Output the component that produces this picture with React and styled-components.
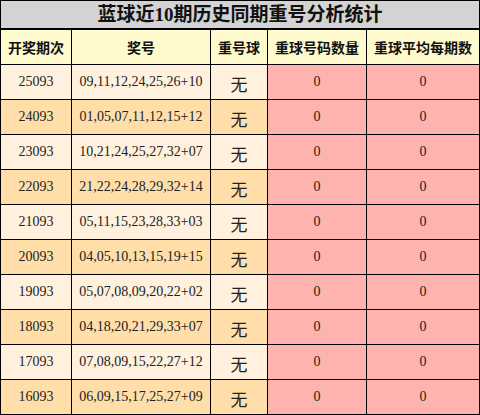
import styled, { createGlobalStyle } from "styled-components";

const GlobalStyle = createGlobalStyle`
  body {
    margin: 0;
    background: #fff;
  }
`;

const Table = styled.table`
  width: 480px;
  border-collapse: collapse;
  table-layout: fixed;
  font-family: "Liberation Serif", "Noto Sans CJK SC", serif;
  color: #222;
`;

const TitleCell = styled.th`
  height: 27px;
  padding: 0;
  background: #d3d3d3;
  border: 1px solid #000;
  border-bottom-width: 2px;
  font-size: 19px;
  font-weight: bold;
  color: #111;
  text-align: center;
  line-height: 1;
`;

const HeadCell = styled.th`
  height: 34px;
  padding: 0;
  background: #fffacd;
  border: 1px solid #000;
  font-family: "Noto Sans CJK SC", sans-serif;
  font-size: 14px;
  font-weight: bold;
  color: #111;
  text-align: center;
  line-height: 1;
`;

const Cell = styled.td`
  height: ${(p) => (p.$cjk ? "31px" : "34px")};
  padding: ${(p) => (p.$cjk ? "3px 0 0" : "0")};
  border: 1px solid #000;
  background: ${(p) => (p.$pink ? "#ffb3ae" : p.$dark ? "#ffdeaa" : "#fff1de")};
  font-size: ${(p) => (p.$cjk ? "17px" : "14px")};
  font-family: ${(p) =>
    p.$cjk ? '"Noto Sans CJK SC", sans-serif' : '"Liberation Serif", serif'};
  text-align: center;
  vertical-align: middle;
  line-height: 1;
`;

const rows = [
  ["25093", "09,11,12,24,25,26+10"],
  ["24093", "01,05,07,11,12,15+12"],
  ["23093", "10,21,24,25,27,32+07"],
  ["22093", "21,22,24,28,29,32+14"],
  ["21093", "05,11,15,23,28,33+03"],
  ["20093", "04,05,10,13,15,19+15"],
  ["19093", "05,07,08,09,20,22+02"],
  ["18093", "04,18,20,21,29,33+07"],
  ["17093", "07,08,09,15,22,27+12"],
  ["16093", "06,09,15,17,25,27+09"],
];

export default function App() {
  return (
    <>
      <GlobalStyle />
      <Table>
        <colgroup>
          <col style={{ width: 71 }} />
          <col style={{ width: 139 }} />
          <col style={{ width: 57 }} />
          <col style={{ width: 99 }} />
          <col />
        </colgroup>
        <thead>
          <tr>
            <TitleCell colSpan={5}>蓝球近10期历史同期重号分析统计</TitleCell>
          </tr>
          <tr>
            <HeadCell>开奖期次</HeadCell>
            <HeadCell>奖号</HeadCell>
            <HeadCell>重号球</HeadCell>
            <HeadCell>重球号码数量</HeadCell>
            <HeadCell>重球平均每期数</HeadCell>
          </tr>
        </thead>
        <tbody>
          {rows.map(([issue, nums], i) => (
            <tr key={issue}>
              <Cell $dark={i % 2 === 1}>{issue}</Cell>
              <Cell $dark={i % 2 === 1}>{nums}</Cell>
              <Cell $dark={i % 2 === 1} $cjk>
                无
              </Cell>
              <Cell $pink>0</Cell>
              <Cell $pink>0</Cell>
            </tr>
          ))}
        </tbody>
      </Table>
    </>
  );
}
